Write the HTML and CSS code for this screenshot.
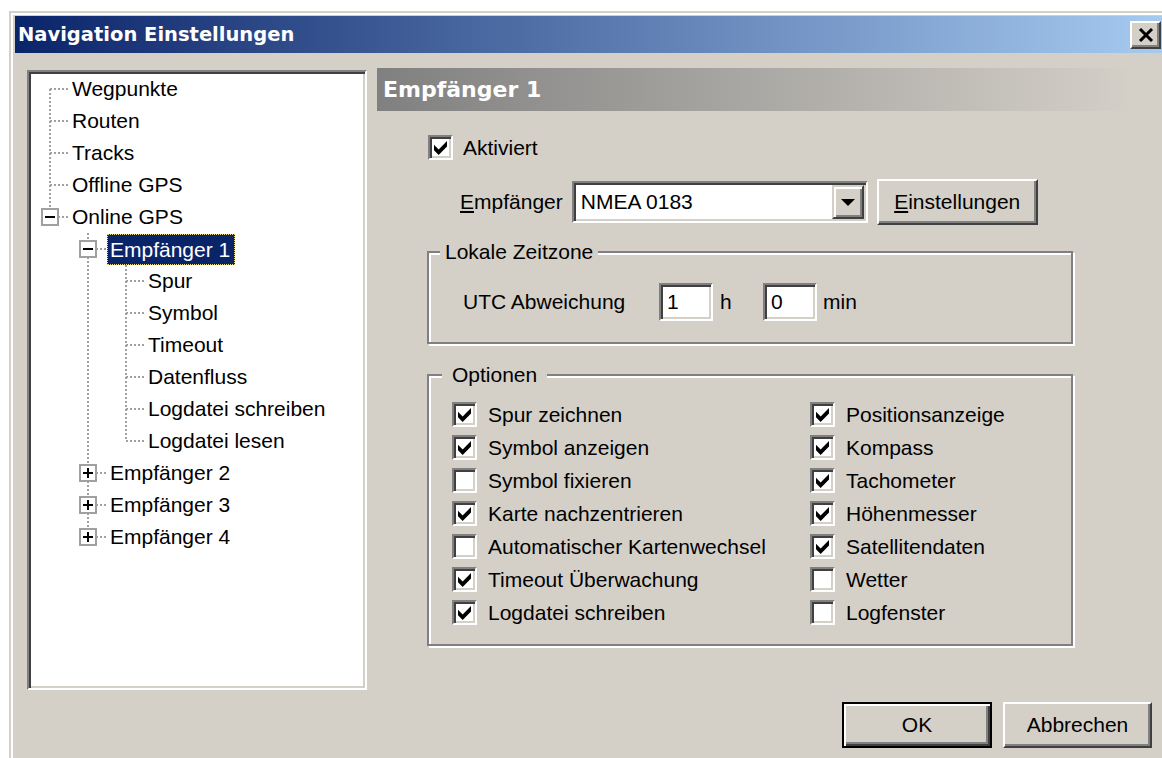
FILE: index.html
```html
<!DOCTYPE html>
<html lang="de">
<head>
<meta charset="utf-8">
<title>Navigation Einstellungen</title>
<link rel="stylesheet" href="styles.css">
</head>
<body>
<div class="window">
  <div class="titlebar">
    <span class="title">Navigation Einstellungen</span>
    <span class="close-btn">
      <svg width="16" height="14" viewBox="0 0 16 14"><path d="M2 1 L14 13 M14 1 L2 13" stroke="#000" stroke-width="3" fill="none"/></svg>
    </span>
  </div>

  <div class="content">
    <div class="main">
      <div class="tree">
        <div class="node"><span class="g first"></span><span class="label">Wegpunkte</span></div>
        <div class="node"><span class="g tee"></span><span class="label">Routen</span></div>
        <div class="node"><span class="g tee"></span><span class="label">Tracks</span></div>
        <div class="node"><span class="g tee"></span><span class="label">Offline GPS</span></div>
        <div class="node"><span class="g last"><span class="box minus"></span></span><span class="label">Online GPS</span></div>
        <div class="node"><span class="g"></span><span class="g tee"><span class="box minus"></span></span><span class="label sel">Empfänger 1</span></div>
        <div class="node"><span class="g"></span><span class="g pipe"></span><span class="g tee"></span><span class="label">Spur</span></div>
        <div class="node"><span class="g"></span><span class="g pipe"></span><span class="g tee"></span><span class="label">Symbol</span></div>
        <div class="node"><span class="g"></span><span class="g pipe"></span><span class="g tee"></span><span class="label">Timeout</span></div>
        <div class="node"><span class="g"></span><span class="g pipe"></span><span class="g tee"></span><span class="label">Datenfluss</span></div>
        <div class="node"><span class="g"></span><span class="g pipe"></span><span class="g tee"></span><span class="label">Logdatei schreiben</span></div>
        <div class="node"><span class="g"></span><span class="g pipe"></span><span class="g last"></span><span class="label">Logdatei lesen</span></div>
        <div class="node"><span class="g"></span><span class="g tee"><span class="box plus"></span></span><span class="label">Empfänger 2</span></div>
        <div class="node"><span class="g"></span><span class="g tee"><span class="box plus"></span></span><span class="label">Empfänger 3</span></div>
        <div class="node"><span class="g"></span><span class="g last"><span class="box plus"></span></span><span class="label">Empfänger 4</span></div>
      </div>

      <div class="panel">
        <div class="panel-head">Empfänger 1</div>

        <div class="row-active">
          <span class="cb on"><svg width="13" height="14" viewBox="0 0 7 7.5"><polygon points="0,2 2.5,4.5 7,0 7,3 2.5,7.5 0,5" fill="#000"/></svg></span>
          <span>Aktiviert</span>
        </div>

        <div class="row-recv">
          <span><u>E</u>mpfänger</span>
          <span class="combo">
            <span class="combo-text">NMEA 0183</span>
            <span class="combo-btn"><span class="arrow"></span></span>
          </span>
          <span class="btn settings"><span><u>E</u>instellungen</span></span>
        </div>

        <div class="group zone">
          <div class="legend">Lokale Zeitzone</div>
          <div class="utc-row">
            <span class="utc-label">UTC Abweichung</span>
            <span class="field">1</span>
            <span class="unit-h">h</span>
            <span class="field">0</span>
            <span class="unit-min">min</span>
          </div>
        </div>

        <div class="group opts">
          <div class="legend">Optionen</div>
          <div class="opt-grid">
            <div class="opt"><span class="cb on"><svg width="13" height="14" viewBox="0 0 7 7.5"><polygon points="0,2 2.5,4.5 7,0 7,3 2.5,7.5 0,5" fill="#000"/></svg></span><span>Spur zeichnen</span></div>
            <div class="opt"><span class="cb on"><svg width="13" height="14" viewBox="0 0 7 7.5"><polygon points="0,2 2.5,4.5 7,0 7,3 2.5,7.5 0,5" fill="#000"/></svg></span><span>Positionsanzeige</span></div>
            <div class="opt"><span class="cb on"><svg width="13" height="14" viewBox="0 0 7 7.5"><polygon points="0,2 2.5,4.5 7,0 7,3 2.5,7.5 0,5" fill="#000"/></svg></span><span>Symbol anzeigen</span></div>
            <div class="opt"><span class="cb on"><svg width="13" height="14" viewBox="0 0 7 7.5"><polygon points="0,2 2.5,4.5 7,0 7,3 2.5,7.5 0,5" fill="#000"/></svg></span><span>Kompass</span></div>
            <div class="opt"><span class="cb"></span><span>Symbol fixieren</span></div>
            <div class="opt"><span class="cb on"><svg width="13" height="14" viewBox="0 0 7 7.5"><polygon points="0,2 2.5,4.5 7,0 7,3 2.5,7.5 0,5" fill="#000"/></svg></span><span>Tachometer</span></div>
            <div class="opt"><span class="cb on"><svg width="13" height="14" viewBox="0 0 7 7.5"><polygon points="0,2 2.5,4.5 7,0 7,3 2.5,7.5 0,5" fill="#000"/></svg></span><span>Karte nachzentrieren</span></div>
            <div class="opt"><span class="cb on"><svg width="13" height="14" viewBox="0 0 7 7.5"><polygon points="0,2 2.5,4.5 7,0 7,3 2.5,7.5 0,5" fill="#000"/></svg></span><span>Höhenmesser</span></div>
            <div class="opt"><span class="cb"></span><span>Automatischer Kartenwechsel</span></div>
            <div class="opt"><span class="cb on"><svg width="13" height="14" viewBox="0 0 7 7.5"><polygon points="0,2 2.5,4.5 7,0 7,3 2.5,7.5 0,5" fill="#000"/></svg></span><span>Satellitendaten</span></div>
            <div class="opt"><span class="cb on"><svg width="13" height="14" viewBox="0 0 7 7.5"><polygon points="0,2 2.5,4.5 7,0 7,3 2.5,7.5 0,5" fill="#000"/></svg></span><span>Timeout Überwachung</span></div>
            <div class="opt"><span class="cb"></span><span>Wetter</span></div>
            <div class="opt"><span class="cb on"><svg width="13" height="14" viewBox="0 0 7 7.5"><polygon points="0,2 2.5,4.5 7,0 7,3 2.5,7.5 0,5" fill="#000"/></svg></span><span>Logdatei schreiben</span></div>
            <div class="opt"><span class="cb"></span><span>Logfenster</span></div>
          </div>
        </div>
      </div>
    </div>

    <div class="actions">
      <span class="btn default ok">OK</span>
      <span class="btn cancel">Abbrechen</span>
    </div>
  </div>
</div>
</body>
</html>
```

FILE: styles.css
```css
html, body {
  margin: 0;
  background: #fff;
  overflow: hidden;
}

body {
  font-family: "Liberation Sans", Arial, sans-serif;
  font-size: 21px;
  color: #000;
}

/* dialog frame */
.window {
  margin: 11px 0 0 9px;
  width: 1161px;
  height: 760px;
  box-sizing: border-box;
  background: #d4d0c8;
  border: 2px solid;
  border-color: #d4d0c8 #404040 #404040 #d4d0c8;
  box-shadow: inset 2px 2px #fff, inset -2px -2px #808080;
  padding: 3px 4px 4px;
  display: flex;
  flex-direction: column;
}

.titlebar {
  flex: none;
  height: 37px;
  display: flex;
  align-items: center;
  padding-left: 3px;
  background: linear-gradient(to right, #0a246a, #a6caf0);
}

.title {
  flex: 1;
  font: bold 19.5px "DejaVu Sans", sans-serif;
  color: #fff;
  white-space: nowrap;
}

.close-btn {
  width: 31px;
  height: 28px;
  margin-right: 3px;
  box-sizing: border-box;
  background: #d4d0c8;
  border: 2px solid;
  border-color: #fff #404040 #404040 #fff;
  box-shadow: inset -2px -2px #808080;
  display: flex;
  align-items: center;
  justify-content: center;
}

.content {
  padding: 15px 12px 0;
  display: flex;
  flex-direction: column;
}

.main {
  display: flex;
  align-items: flex-start;
  gap: 10px;
}

/* tree view */
.tree {
  --h: repeating-linear-gradient(to right, #a0a0a0 0 2px, transparent 2px 4px);
  --v: repeating-linear-gradient(to bottom, #a0a0a0 0 2px, transparent 2px 4px);
  flex: none;
  margin-top: 2px;
  width: 340px;
  height: 620px;
  box-sizing: border-box;
  padding: 1px 2px;
  background: #fff;
  border: 2px solid;
  border-color: #808080 #fff #fff #808080;
  box-shadow: inset 2px 2px #404040, inset -2px -2px #d4d0c8;
}

.node {
  height: 32px;
  display: flex;
  align-items: center;
}

.g {
  flex: none;
  width: 38px;
  height: 32px;
  display: flex;
  align-items: center;
  justify-content: center;
  background-repeat: no-repeat;
}

.g.first {
  background-image: var(--h), var(--v);
  background-size: 19px 2px, 2px 16px;
  background-position: right center, center bottom;
}

.g.tee {
  background-image: var(--h), var(--v);
  background-size: 19px 2px, 2px 100%;
  background-position: right center, center top;
}

.g.last {
  background-image: var(--h), var(--v);
  background-size: 19px 2px, 2px 16px;
  background-position: right center, center top;
}

.g.pipe {
  background-image: var(--v);
  background-size: 2px 100%;
  background-position: center top;
}

.box {
  width: 18px;
  height: 18px;
  box-sizing: border-box;
  border: 2px solid #a0a0a0;
}

.box.minus {
  background: linear-gradient(#000, #000) center / 10px 2px no-repeat, #fff;
}

.box.plus {
  background:
    linear-gradient(#000, #000) center / 10px 2px no-repeat,
    linear-gradient(#000, #000) center / 2px 10px no-repeat,
    #fff;
}

.label {
  padding: 0 3px;
  line-height: 30px;
  white-space: nowrap;
}

.label.sel {
  padding: 0 5px 0 3px;
  line-height: 31px;
  background: #0a246a;
  color: #fff;
  outline: 1px dotted #e9d98a;
  outline-offset: -1px;
}

/* right page */
.panel {
  width: 758px;
  flex: none;
  display: flex;
  flex-direction: column;
}

.panel-head {
  height: 43px;
  padding-left: 6px;
  font: bold 22px/43px "DejaVu Sans", sans-serif;
  color: #fff;
  background: linear-gradient(to right, #808080, #d4d0c8);
}

.cb {
  flex: none;
  width: 25px;
  height: 25px;
  box-sizing: border-box;
  background: #fff;
  border: 2px solid;
  border-color: #808080 #fff #fff #808080;
  box-shadow: inset 2px 2px #404040, inset -2px -2px #d4d0c8;
  display: flex;
  align-items: center;
  justify-content: center;
}

.row-active {
  margin: 24px 0 0 51px;
  height: 25px;
  display: flex;
  align-items: center;
  gap: 10px;
}

.row-recv {
  margin: 19px 0 0 83px;
  height: 46px;
  display: flex;
  align-items: center;
}

.combo {
  margin-left: 9px;
  width: 296px;
  height: 42px;
  box-sizing: border-box;
  padding: 2px;
  background: #fff;
  border: 2px solid;
  border-color: #808080 #fff #fff #808080;
  box-shadow: inset 2px 2px #404040, inset -2px -2px #d4d0c8;
  display: flex;
  align-items: center;
}

.combo-text {
  flex: 1;
  padding-left: 5px;
}

.combo-btn {
  width: 32px;
  height: 34px;
  box-sizing: border-box;
  background: #d4d0c8;
  border: 2px solid;
  border-color: #d4d0c8 #404040 #404040 #d4d0c8;
  box-shadow: inset 2px 2px #fff, inset -2px -2px #808080;
  display: flex;
  align-items: center;
  justify-content: center;
}

.arrow {
  width: 0;
  height: 0;
  border-left: 7px solid transparent;
  border-right: 7px solid transparent;
  border-top: 7px solid #000;
}

.btn {
  box-sizing: border-box;
  height: 46px;
  background: #d4d0c8;
  border: 2px solid;
  border-color: #fff #404040 #404040 #fff;
  box-shadow: inset -2px -2px #808080;
  display: flex;
  align-items: center;
  justify-content: center;
  white-space: nowrap;
}

.btn.settings {
  margin-left: 9px;
  width: 161px;
}

.btn.default {
  border: 2px solid #000;
  box-shadow: inset 2px 2px #fff, inset -2px -2px #404040, inset -4px -4px #808080;
}

.btn.ok {
  width: 150px;
}

.btn.cancel {
  width: 149px;
}

/* etched group boxes */
.group {
  margin: 26px 0 0 50px;
  width: 646px;
  box-sizing: border-box;
  border: 2px solid #808080;
  box-shadow: inset 2px 2px #fff, 2px 2px #fff;
  display: flex;
  flex-direction: column;
  align-items: flex-start;
}

.legend {
  line-height: 24px;
  margin-top: -13px;
  background: #d4d0c8;
  white-space: nowrap;
}

.zone {
  padding-bottom: 21px;
}

.zone .legend {
  margin-left: 11px;
  padding: 0 5px;
}

.utc-row {
  margin-top: 19px;
  padding-left: 34px;
  height: 38px;
  display: flex;
  align-items: center;
}

.utc-label {
  width: 196px;
}

.field {
  width: 54px;
  height: 38px;
  box-sizing: border-box;
  padding-left: 6px;
  background: #fff;
  border: 2px solid;
  border-color: #808080 #fff #fff #808080;
  box-shadow: inset 2px 2px #404040, inset -2px -2px #d4d0c8;
  display: flex;
  align-items: center;
}

.unit-h {
  width: 50px;
  box-sizing: border-box;
  padding-left: 7px;
}

.unit-min {
  padding-left: 6px;
}

.opts {
  margin-top: 30px;
  padding-bottom: 15px;
}

.opts .legend {
  margin-left: 13px;
  padding: 0 10px;
}

.opt-grid {
  margin-top: 11px;
  padding-left: 23px;
  display: grid;
  grid-template-columns: 358px auto;
  grid-auto-rows: 33px;
}

.opt {
  display: flex;
  align-items: center;
  gap: 11px;
  white-space: nowrap;
}

/* dialog buttons */
.actions {
  margin-top: 12px;
  display: flex;
  justify-content: flex-end;
  gap: 11px;
}
```
